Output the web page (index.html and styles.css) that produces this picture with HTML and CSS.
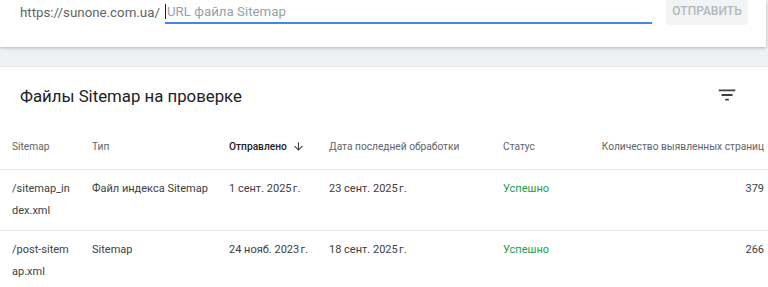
FILE: index.html
```html
<!DOCTYPE html>
<html lang="ru">
<head>
<meta charset="utf-8">
<link rel="stylesheet" href="styles.css">
</head>
<body>
<div class="topcard">
  <span class="prefix">https://sunone.com.ua/</span>
  <div class="field"><span class="caret"></span><span class="placeholder">URL файла Sitemap</span></div>
  <div class="btn">ОТПРАВИТЬ</div>
</div>
<div class="gap"></div>
<div class="card">
  <div class="titlebar">
    <h2 class="title">Файлы Sitemap на проверке</h2>
    <svg class="filter" viewBox="0 0 24 24" width="22" height="22"><path d="M10 18h4v-2h-4v2zM3 6v2h18V6H3zm3 7h12v-2H6v2z"/></svg>
  </div>
  <div class="table">
    <div class="row head">
      <div class="cell">Sitemap</div>
      <div class="cell">Тип</div>
      <div class="cell sorted">Отправлено <svg class="arrow" viewBox="0 0 24 24" width="13" height="13"><path d="M20 12l-1.41-1.41L13 16.17V4h-2v12.17l-5.58-5.59L4 12l8 8 8-8z"/></svg></div>
      <div class="cell">Дата последней обработки</div>
      <div class="cell">Статус</div>
      <div class="cell num">Количество выявленных страниц</div>
    </div>
    <div class="row">
      <div class="cell path">/sitemap_index.xml</div>
      <div class="cell">Файл индекса Sitemap</div>
      <div class="cell">1 сент. 2025&#8239;г.</div>
      <div class="cell">23 сент. 2025&#8239;г.</div>
      <div class="cell ok">Успешно</div>
      <div class="cell num">379</div>
    </div>
    <div class="row">
      <div class="cell path">/post-sitemap.xml</div>
      <div class="cell">Sitemap</div>
      <div class="cell">24 нояб. 2023&#8239;г.</div>
      <div class="cell">18 сент. 2025&#8239;г.</div>
      <div class="cell ok">Успешно</div>
      <div class="cell num">266</div>
    </div>
  </div>
</div>
</body>
</html>
```
FILE: styles.css
```css
html, body {
  margin: 0;
  padding: 0;
  background: #eef0f4;
  font-family: Roboto, "Noto Sans", sans-serif;
  overflow: hidden;
}
.topcard {
  width: 766px;
  height: 47px;
  background: #fff;
  box-shadow: 0 1px 3px rgba(60,64,67,0.35);
  display: flex;
  align-items: flex-start;
  position: relative;
  z-index: 1;
}
.prefix {
  margin-left: 20px;
  width: 145px;
  font-size: 13.3px;
  line-height: 24px;
  margin-top: 1px;
  color: #5f6368;
}
.field {
  width: 487px;
  border-bottom: 2px solid #4285f4;
  display: flex;
  align-items: center;
  font-size: 13.3px;
  line-height: 24px;
  padding-top: 1px;
  box-sizing: border-box;
  height: 24px;
}
.caret {
  width: 1px;
  height: 15px;
  background: #202124;
  margin-right: 1px;
}
.placeholder {
  color: #9aa0a6;
}
.btn {
  margin-left: 14px;
  width: 82px;
  height: 25px;
  background: #f1f3f4;
  border-radius: 0 0 4px 4px;
  color: #b5b8bc;
  font-size: 12px;
  font-weight: 500;
  line-height: 22px;
  text-align: center;
}
.gap {
  height: 20px;
}
.card {
  background: #fff;
  box-shadow: 0 0 1px rgba(60,64,67,0.3);
  min-height: 230px;
}
.titlebar {
  display: flex;
  align-items: center;
  justify-content: space-between;
  height: 57px;
}
.title {
  margin: 0 0 0 20px;
  font-size: 16.8px;
  font-weight: 400;
  color: #202124;
  line-height: 24px;
}
.filter {
  fill: #3c4043;
  margin-right: 30px;
  margin-top: -1px;
}
.row {
  display: grid;
  grid-template-columns: 80px 137px 100px 174px 99px 1fr;
  border-bottom: 1px solid #e5e7ea;
  font-size: 11px;
  color: #3c4043;
}
.row.head {
  height: 45px;
  align-items: center;
  color: #5f6368;
  font-size: 10.2px;
}
.row:not(.head) {
  padding: 8px 0 8px;
  line-height: 22px;
  min-height: 44px;
}
.row:last-child {
  border-bottom: none;
}
.cell {
  padding-left: 12px;
}
.path {
  word-break: break-all;
  padding-right: 8px;
}
.sorted {
  color: #202124;
  font-weight: 500;
  display: flex;
  align-items: center;
  gap: 5px;
}
.arrow {
  fill: #3c4043;
}
.ok {
  color: #23a04a;
}
.num {
  text-align: right;
  padding-right: 4px;
  padding-left: 0;
}
```
